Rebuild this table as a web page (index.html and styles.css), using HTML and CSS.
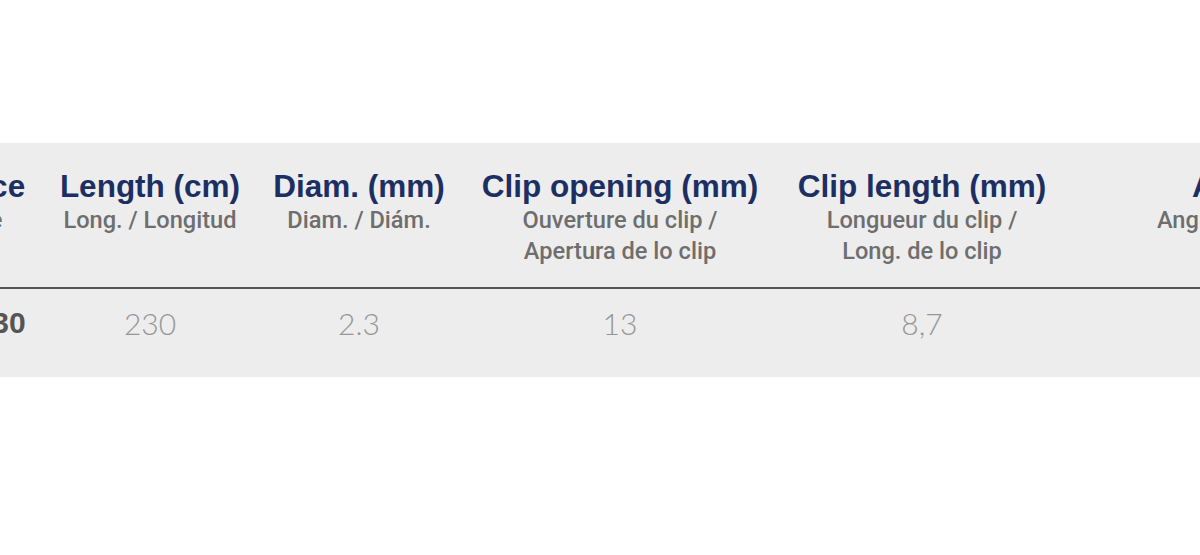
FILE: index.html
```html
<!DOCTYPE html>
<html lang="en">
<head>
<meta charset="utf-8">
<title>Specifications</title>
<link rel="stylesheet" href="styles.css">
</head>
<body>
<section class="panel">
  <table class="specs">
    <colgroup>
      <col class="c-ref">
      <col class="c-len">
      <col class="c-diam">
      <col class="c-open">
      <col class="c-cliplen">
      <col class="c-angle">
    </colgroup>
    <thead>
      <tr>
        <th><div class="h">Reference</div><div class="sub">Référence</div></th>
        <th><div class="h">Length (cm)</div><div class="sub">Long. / Longitud</div></th>
        <th><div class="h">Diam. (mm)</div><div class="sub">Diam. / Diám.</div></th>
        <th><div class="h">Clip opening (mm)</div><div class="sub">Ouverture du clip /<br>Apertura de lo clip</div></th>
        <th><div class="h">Clip length (mm)</div><div class="sub">Longueur du clip /<br>Long. de lo clip</div></th>
        <th><div class="h">Angle (°)</div><div class="sub">Angle / Angulación</div></th>
      </tr>
    </thead>
    <tbody>
      <tr>
        <td class="ref">HC-162330</td>
        <td>230</td>
        <td>2.3</td>
        <td>13</td>
        <td>8,7</td>
        <td></td>
      </tr>
    </tbody>
  </table>
</section>
</body>
</html>
```

FILE: styles.css
```css
html, body {
  margin: 0;
  padding: 0;
  background: #ffffff;
}

body {
  font-family: "Liberation Sans", Arial, sans-serif;
}

.panel {
  margin-top: 143px;
  height: 234px;
  background: #ededed;
  overflow: hidden;
}

.specs {
  table-layout: fixed;
  border-collapse: collapse;
  width: 1594px;
  margin-left: -144px;
}

.c-ref { width: 186px; }
.c-len { width: 216px; }
.c-diam { width: 202px; }
.c-open { width: 320px; }
.c-cliplen { width: 284px; }
.c-angle { width: 386px; }

.specs th {
  padding: 25px 10px 20px;
  vertical-align: top;
  text-align: center;
  font-weight: normal;
  border-bottom: 2px solid #555555;
}

.h {
  font-size: 31.5px;
  line-height: 36px;
  font-weight: bold;
  color: #1c2f63;
  white-space: nowrap;
}

.sub {
  margin-top: 1px;
  font-family: Roboto, "Liberation Sans", sans-serif;
  font-weight: 500;
  font-size: 23.6px;
  line-height: 31px;
  color: #6e6e6e;
  white-space: nowrap;
}

.specs td {
  padding: 16px 10px 36px;
  text-align: center;
  vertical-align: top;
  font-family: Lato, "Liberation Sans", sans-serif;
  font-weight: 300;
  font-size: 30px;
  line-height: 36px;
  color: #969696;
}

.specs td.ref {
  font-family: "Liberation Sans", Arial, sans-serif;
  font-weight: bold;
  color: #555555;
}
```
